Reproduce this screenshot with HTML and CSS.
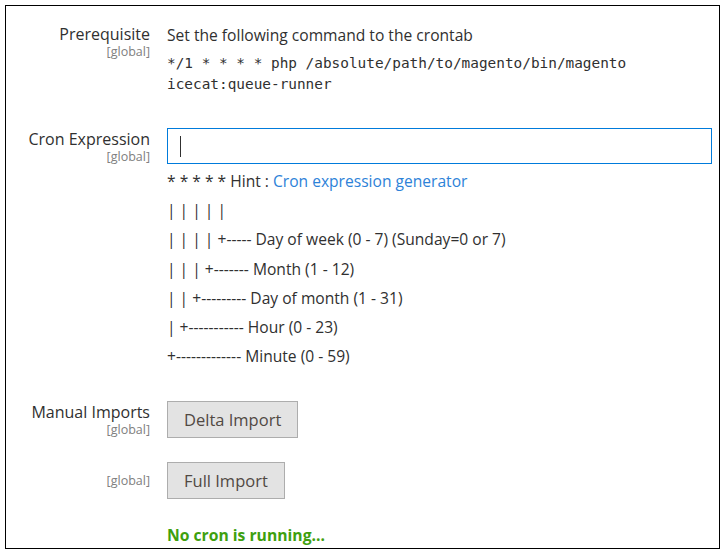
FILE: index.html
```html
<!DOCTYPE html>
<html>
<head>
<meta charset="utf-8">
<link rel="stylesheet" href="styles.css">
</head>
<body>
<div class="frame">
  <div class="row row-prereq">
    <div class="label"><span class="title">Prerequisite</span><span class="scope">[global]</span></div>
    <div class="value">
      <div class="text">Set the following command to the crontab</div>
      <div class="code">*/1 * * * * php /absolute/path/to/magento/bin/magento<br>icecat:queue-runner</div>
    </div>
  </div>
  <div class="row row-cron">
    <div class="label"><span class="title">Cron Expression</span><span class="scope">[global]</span></div>
    <div class="value">
      <div class="input"><span class="caret"></span></div>
      <div class="hint">
        <p>* * * * * Hint : <a class="link">Cron expression generator</a></p>
        <p>| | | | |</p>
        <p>| | | | +----- Day of week (0 - 7) (Sunday=0 or 7)</p>
        <p>| | | +------- Month (1 - 12)</p>
        <p>| | +--------- Day of month (1 - 31)</p>
        <p>| +----------- Hour (0 - 23)</p>
        <p>+------------- Minute (0 - 59)</p>
      </div>
    </div>
  </div>
  <div class="row row-delta">
    <div class="label"><span class="title">Manual Imports</span><span class="scope">[global]</span></div>
    <div class="value"><button class="btn">Delta Import</button></div>
  </div>
  <div class="row row-full">
    <div class="label"><span class="scope scope-only">[global]</span></div>
    <div class="value"><button class="btn">Full Import</button></div>
  </div>
  <div class="row row-status">
    <div class="label"></div>
    <div class="value"><div class="status">No cron is running...</div></div>
  </div>
</div>
</body>
</html>
```
FILE: styles.css
```css
html, body {
  margin: 0;
  padding: 0;
  background: #fff;
}
body {
  padding: 5px 0 0 5px;
  font-family: "Open Sans", "Liberation Sans", sans-serif;
  color: #303030;
  font-size: 15.6px;
}
.frame {
  width: 713px;
  height: 542px;
  border: 1px solid #000;
  overflow: hidden;
  box-sizing: content-box;
}
.row {
  display: grid;
  grid-template-columns: 144px 1fr;
  column-gap: 17px;
}
.label {
  display: flex;
  flex-direction: column;
  align-items: flex-end;
  text-align: right;
}
.title {
  font-size: 16px;
  font-weight: 400;
  color: #303030;
  line-height: 19px;
}
.scope {
  font-size: 12.5px;
  color: #808080;
  line-height: 14px;
  margin-top: 1px;
}
.scope-only {
  margin-top: 0;
}
.value {
  padding-right: 7px;
}
.row-prereq {
  padding-top: 18px;
}
.row-prereq .label {
  padding-top: 1px;
}
.text {
  font-size: 15.6px;
  line-height: 20px;
  margin-top: 1px;
}
.code {
  margin-top: 8px;
  font-family: "DejaVu Sans Mono", monospace;
  font-size: 14.4px;
  line-height: 21px;
  color: #303030;
}
.row-cron {
  padding-top: 33px;
}
.row-cron .label {
  padding-top: 2px;
}
.input {
  height: 34px;
  border: 1px solid #007bdb;
  display: flex;
  align-items: center;
  padding-left: 12px;
}
.caret {
  width: 1px;
  height: 21px;
  background: #303030;
}
.hint {
  margin-top: 3px;
}
.hint p {
  margin: 0;
  font-size: 15.6px;
  line-height: 29.2px;
  color: #303030;
}
.link {
  color: #2d82d8;
}
.row-delta {
  padding-top: 30px;
}
.row-delta .label {
  padding-top: 2px;
}
.btn {
  font-family: "Open Sans", "Liberation Sans", sans-serif;
  font-size: 16.5px;
  font-weight: 400;
  color: #514943;
  background: #e3e3e3;
  border: 1px solid #adadad;
  height: 37px;
  padding: 0 16px;
  margin: 0;
}
.row-full {
  padding-top: 24px;
}
.row-full .label {
  justify-content: center;
}
.row-status {
  padding-top: 25px;
}
.status {
  font-size: 15.7px;
  font-weight: 700;
  color: #3ea00e;
  line-height: 22px;
}
```
